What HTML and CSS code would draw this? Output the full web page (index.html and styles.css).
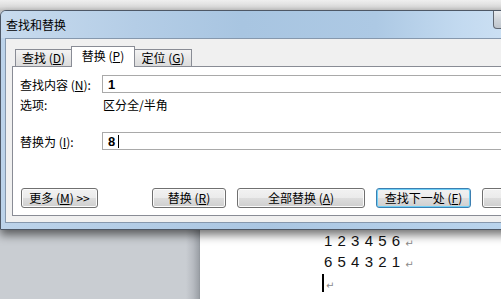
FILE: index.html
```html
<!DOCTYPE html>
<html lang="zh">
<head>
<meta charset="utf-8">
<title>查找和替换</title>
<link rel="stylesheet" href="styles.css">
</head>
<body>
<div class="app">
  <div class="ribbon"></div>
  <div class="workspace">
    <div class="gutter"></div>
    <div class="page">
      <div class="line"><span class="digits">123456</span><span class="pilcrow">↵</span></div>
      <div class="line"><span class="digits">654321</span><span class="pilcrow">↵</span></div>
      <div class="line"><span class="doc-caret"></span><span class="pilcrow">↵</span></div>
    </div>
  </div>
</div>

<div class="dialog">
  <div class="titlebar">
    <span class="title">查找和替换</span>
    <div class="close"></div>
  </div>
  <div class="client">
    <div class="tabs">
      <div class="tab t1">查找 (<u>D</u>)</div>
      <div class="tab active">替换 (<u>P</u>)</div>
      <div class="tab t3">定位 (<u>G</u>)</div>
    </div>
    <div class="panel">
      <div class="row">
        <span class="label">查找内容 (<u>N</u>):</span>
        <div class="field"><b>1</b></div>
      </div>
      <div class="row opts">
        <span class="label">选项:</span>
        <span class="opt-text">区分全/半角</span>
      </div>
      <div class="row r3">
        <span class="label">替换为 (<u>I</u>):</span>
        <div class="field"><b>8</b><span class="caret"></span></div>
      </div>
      <div class="buttons">
        <div class="btn b-more">更多 (<u>M</u>) &gt;&gt;</div>
        <div class="btn b-rep">替换 (<u>R</u>)</div>
        <div class="btn b-all">全部替换 (<u>A</u>)</div>
        <div class="btn b-next default">查找下一处 (<u>F</u>)</div>
        <div class="btn b-cancel"></div>
      </div>
    </div>
  </div>
</div>
</body>
</html>
```

FILE: styles.css
```css
* { box-sizing: border-box; }

html, body {
  margin: 0;
  padding: 0;
  width: 501px;
  height: 299px;
  overflow: hidden;
  font-family: "Noto Sans CJK SC", "Liberation Sans", sans-serif;
  font-size: 12px;
  color: #000;
}

body { position: relative; }

u { text-decoration: underline; text-underline-offset: 1px; }

/* background application */
.app {
  display: flex;
  flex-direction: column;
  height: 299px;
}

.ribbon {
  height: 11px;
  background: linear-gradient(#efefef, #dcdcdc 60%, #c4c4c4);
}

.workspace {
  flex: 1;
  display: flex;
}

.gutter {
  width: 200px;
  background: linear-gradient(to right, #c9cdd2 0, #c9cdd2 186px, #b7bbc1 193px, #9ca1a7 199px, #8f949a 200px);
}

.page {
  flex: 1;
  background: #fff;
  padding: 219px 0 0 122px;
}

.line {
  height: 21px;
  display: flex;
  align-items: center;
}

.digits {
  font-family: "Liberation Sans", sans-serif;
  font-size: 15px;
  letter-spacing: 5.2px;
  color: #111;
  margin-left: 2px;
}

.pilcrow {
  font-family: "DejaVu Sans", sans-serif;
  font-size: 10px;
  color: #8a8a8a;
  margin-top: 6px;
}

.doc-caret {
  width: 2px;
  height: 18px;
  background: #000;
  margin-right: 2px;
}

/* dialog window */
.dialog {
  position: absolute;
  top: 10px;
  left: 0;
  width: 538px;
  height: 220px;
  border: 1px solid #4e5866;
  border-radius: 6px 6px 0 0;
  background: linear-gradient(to right, #bcd3ea, #aac6e2 50%, #bcd6ee);
  padding-bottom: 6px;
  display: flex;
  flex-direction: column;
  box-shadow: 0 5px 10px rgba(0, 0, 0, 0.55);
}

.titlebar {
  height: 27px;
  display: flex;
  padding-left: 5px;
  border-radius: 5px 5px 0 0;
  background: linear-gradient(to right, #c8dbee 0, #b4cde6 25%, #a8c5e1 45%, #adc9e4 70%, #c3daf0 86%, #d2e4f5 100%);
}

.title {
  line-height: 27px;
}

.close {
  margin-left: auto;
  width: 44px;
  height: 18px;
  border: 1px solid #5f6670;
  border-top: none;
  border-radius: 0 0 0 4px;
  background: linear-gradient(#e9ecef, #d0d5da 50%, #bfc5cc);
}

.client {
  flex: 1;
  margin-left: 4px;
  border: 1px solid #8698ad;
  border-right: none;
  background: #f0f0f0;
  padding: 7px 0 0 6px;
  display: flex;
  flex-direction: column;
}

/* tabs */
.tabs {
  display: flex;
  align-items: flex-end;
  height: 21px;
  margin-left: 3px;
  margin-bottom: -1px;
  position: relative;
  z-index: 1;
}

.tab {
  height: 17px;
  margin-bottom: 1px;
  border: 1px solid #898c95;
  border-bottom: none;
  background: linear-gradient(#f3f3f3, #e7e7e7 50%, #dcdcdc);
  display: flex;
  align-items: center;
  justify-content: center;
  line-height: 1;
}

.t1 { width: 56px; border-right: none; }

.tab.active {
  width: 64px;
  height: 21px;
  margin-bottom: 0;
  background: #fff;
  padding-bottom: 2px;
}

.t3 { width: 57px; border-left: none; }

/* panel */
.panel {
  width: 540px;
  height: 150px;
  border: 1px solid #898c95;
  background: #fff;
  padding: 8px 0 0 7px;
  display: flex;
  flex-direction: column;
}

.row {
  display: flex;
  align-items: center;
  height: 18px;
}

.label {
  width: 82px;
  flex: none;
  white-space: nowrap;
}

.field {
  flex: 1;
  height: 18px;
  border: 1px solid #a9a9a9;
  border-right: none;
  display: flex;
  align-items: center;
  padding-left: 5px;
  font-family: "Liberation Sans", sans-serif;
  font-size: 13px;
}

.field b { font-weight: bold; }

.caret {
  width: 1px;
  height: 13px;
  background: #000;
  margin-left: 3px;
}

.row.opts {
  height: 20px;
  margin-top: 1px;
}

.opt-text { padding-left: 1px; }

.row.r3 { margin-top: 18px; }

/* buttons */
.buttons {
  display: flex;
  margin-top: 38px;
  margin-left: 1px;
  gap: 11px;
}

.btn {
  height: 20px;
  border: 1px solid #707070;
  border-radius: 3px;
  background: linear-gradient(#f2f2f2 0%, #ebebeb 50%, #dddddd 51%, #cfcfcf 100%);
  box-shadow: inset 0 0 0 1px #fbfbfb;
  display: flex;
  align-items: center;
  justify-content: center;
  white-space: nowrap;
  flex: none;
  line-height: 1;
}

.b-more { width: 77px; margin-right: 43px; }
.b-rep { width: 74px; }
.b-all { width: 128px; }
.b-next { width: 95px; }
.b-cancel { width: 74px; }

.btn.default {
  border-color: #3c7fb1;
  box-shadow: inset 0 0 0 1px #6fd0f7;
}
```
